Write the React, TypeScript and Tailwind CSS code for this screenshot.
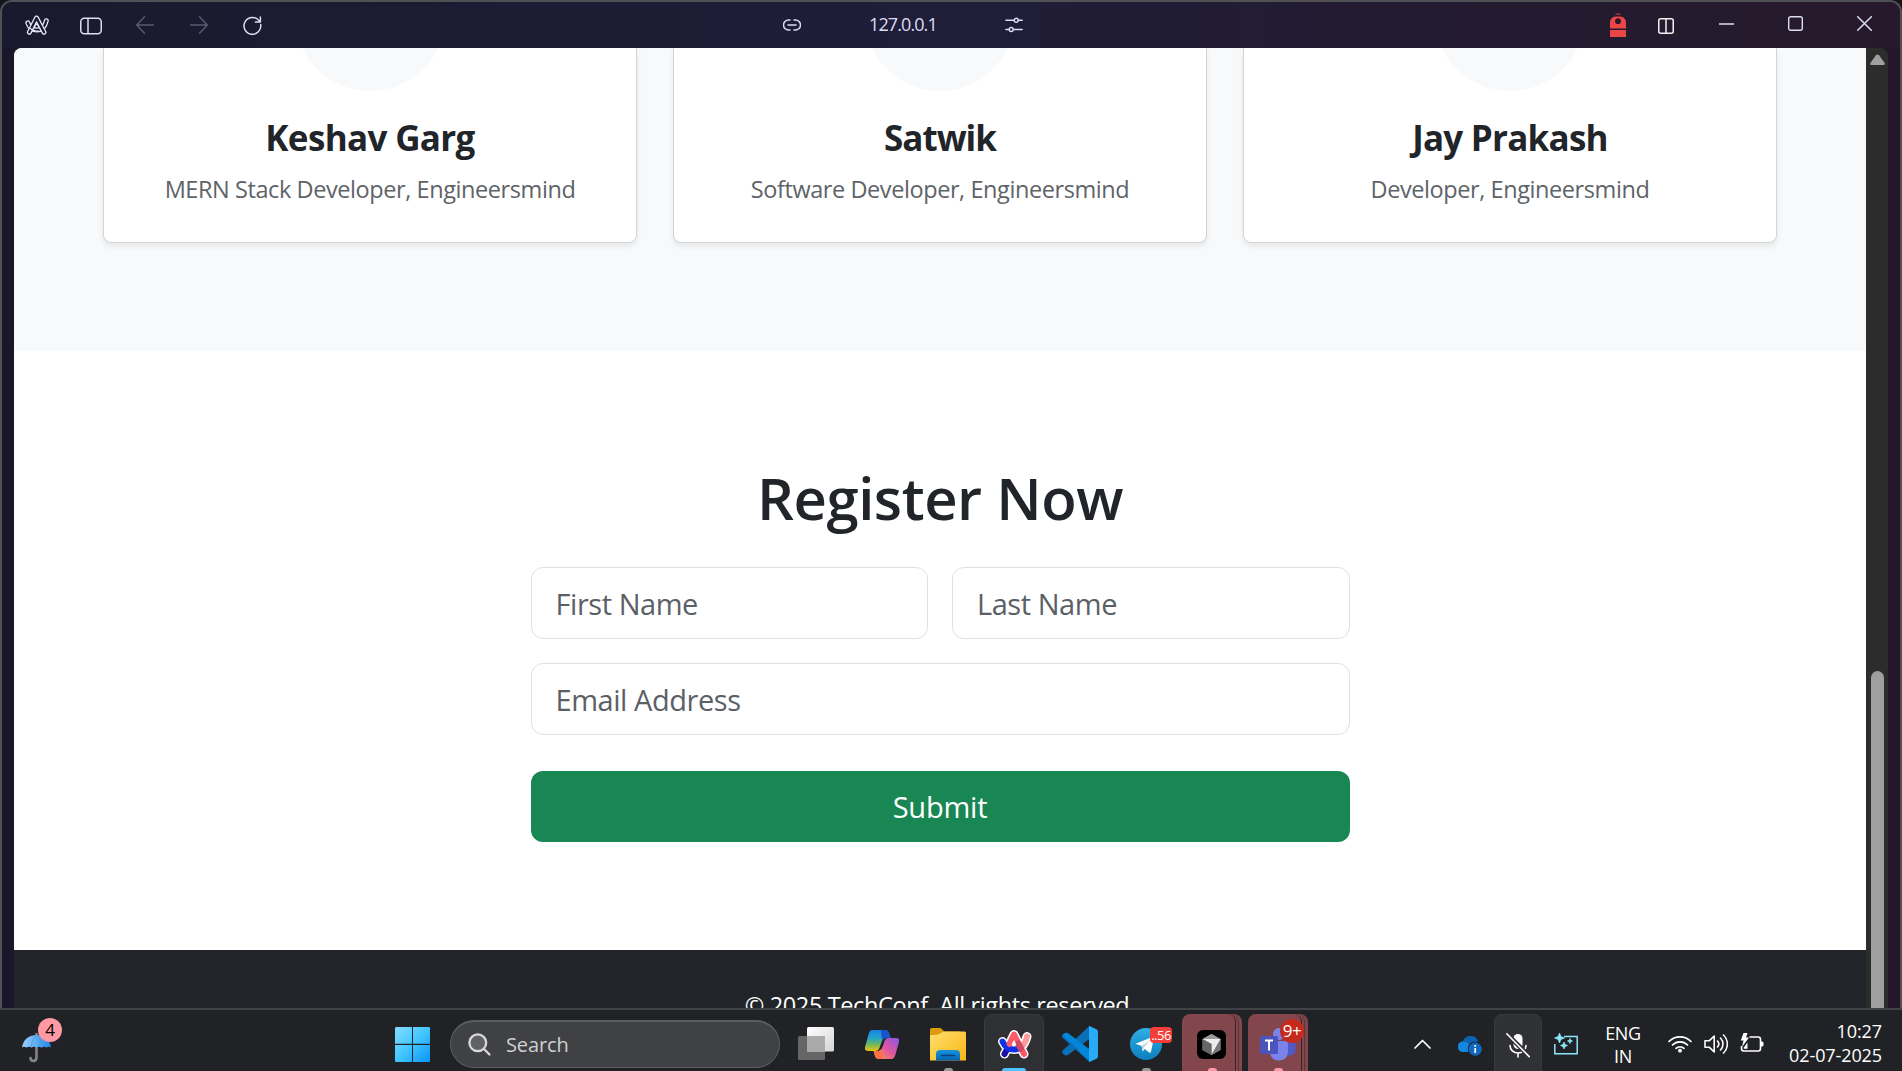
import type { ReactNode } from "react";

const speakers = [
  { name: "Keshav Garg", role: "MERN Stack Developer, Engineersmind", track: "tracking-[-0.65px]" },
  { name: "Satwik", role: "Software Developer, Engineersmind", track: "tracking-[-1px]" },
  { name: "Jay Prakash", role: "Developer, Engineersmind", track: "tracking-[-0.75px]" },
];

function ArcOutline() {
  return (
    <svg className="h-5 w-6" viewBox="0 0 24 20" fill="none" strokeLinecap="round" strokeLinejoin="round">
      <path d="M2.800 7.800c1.500 4.700 4.700 7.200 9.200 7.200 5 0 8-3.500 9.300-9.300" stroke="#e6e6fa" strokeWidth="5" />
      <path d="M2.800 7.800c1.500 4.700 4.700 7.200 9.200 7.200 5 0 8-3.500 9.300-9.300" stroke="#1a1a2e" strokeWidth="2.400" />
      <path d="M4.300 17.300 11.500 3l7.500 14.300" stroke="#e6e6fa" strokeWidth="5" />
      <path d="M4.300 17.300 11.500 3l7.500 14.300" stroke="#1a1a2e" strokeWidth="2.400" />
      <path d="m9.600 11.800 2-3.800 2.200 4M5 13.200c2 2 4.500 3 8.500 3" stroke="#e6e6fa" strokeWidth="1.200" />
    </svg>
  );
}

function TitleBar() {
  return (
    <div className="flex h-[46px] shrink-0 items-center bg-linear-to-r from-[#1a1a2e] via-[#1f1d38] to-[#27192b] text-[#dcdcf5]">
      <div className="flex w-[781px] items-center pl-[23px]">
        <ArcOutline />
        <svg className="ml-[31px] mt-[2px] h-[18px] w-[22px]" viewBox="0 0 22 18" fill="none" stroke="currentColor" strokeWidth="1.5">
          <rect x=".75" y="1.250" width="20.500" height="15.500" rx="3.500" />
          <path d="M8 1v16" />
        </svg>
        <svg className="ml-[34px] h-[18px] w-[18px]" viewBox="0 0 18 18" fill="none" stroke="#5b5972" strokeWidth="1.400" strokeLinecap="round" strokeLinejoin="round">
          <path d="M17.300 9H.8M8.500.8.7 9l7.800 8.200" />
        </svg>
        <svg className="ml-9 h-[18px] w-[18px]" viewBox="0 0 18 18" fill="none" stroke="#5b5972" strokeWidth="1.400" strokeLinecap="round" strokeLinejoin="round">
          <path d="M.7 9h16.500M9.500.8 17.300 9l-7.800 8.200" />
        </svg>
        <svg className="ml-[35px] mt-[1px] h-[19px] w-[19px]" viewBox="0 0 19 19" fill="none" stroke="currentColor" strokeWidth="1.500" strokeLinecap="round" strokeLinejoin="round">
          <path d="M17.700 8.500a8.400 8.400 0 1 1-2-4.200l1.500 1.600M17.400 1v5h-5" />
        </svg>
      </div>
      <svg className="h-3 w-[18px]" viewBox="0 0 18 12" fill="none" stroke="currentColor" strokeWidth="1.500" strokeLinecap="round">
        <path d="M7 1H5.500a4.800 4.800 0 0 0 0 10H7M11 1h1.500a4.800 4.800 0 0 1 0 10H11M5 6h8" />
      </svg>
      <span className="mb-[2px] ml-[68px] w-[70px] text-[18px] leading-6 tracking-[-0.9px]">127.0.0.1</span>
      <svg className="ml-[66px] h-4 w-[18px]" viewBox="0 0 18 16" fill="none" stroke="currentColor" strokeWidth="1.400" strokeLinecap="round">
        <path d="M.8 3.300h8M13.500 3.300h3.700M.8 12.500h3M8.500 12.500h8.700" />
        <circle cx="11.200" cy="3.300" r="2" />
        <circle cx="6.200" cy="12.500" r="2" />
      </svg>
      <div className="ml-auto flex items-center pr-7">
        <svg className="h-6 w-4" viewBox="0 0 16 24" fill="#ec4545">
          <path d="M4.500 1.500a5 3 0 0 1 7 0zM0 15.500V10a8 7 0 0 1 2.500-5.500c1.500-1.300 9.500-1.300 11 0A8 7 0 0 1 16 10v5.500zM0 17h16v7H0z" />
          <circle cx="8" cy="8.200" r="2.900" fill="#27192b" />
        </svg>
        <svg className="ml-8 mt-[2px] h-4 w-4" viewBox="0 0 16 16" fill="none" stroke="#f2f2f2" strokeWidth="1.500">
          <rect x=".75" y=".75" width="14.500" height="14.500" rx="2" />
          <path d="M8 1v14" />
        </svg>
        <svg className="mb-[3px] ml-[45px] h-4 w-[15px]" viewBox="0 0 15 16" stroke="currentColor" strokeWidth="1.400"><path d="M0 8h15" /></svg>
        <svg className="mb-[3px] ml-[54px] h-[15px] w-[15px]" viewBox="0 0 15 15" fill="none" stroke="currentColor" strokeWidth="1.400"><rect x=".7" y=".7" width="13.600" height="13.600" rx="2" /></svg>
        <svg className="mb-[3px] ml-[54px] h-[15px] w-[15px]" viewBox="0 0 15 15" fill="none" stroke="currentColor" strokeWidth="1.500" strokeLinecap="round"><path d="m.7.7 13.600 13.600M14.300.7.7 14.300" /></svg>
      </div>
    </div>
  );
}

const field =
  "h-[72px] w-full rounded-xl border border-[#dee2e6] bg-white px-6 text-[29px] tracking-[-0.45px] text-[#212529] outline-none placeholder:text-[#5b6066] placeholder:opacity-100";

function Page() {
  return (
    <main className="flex w-[1852px] shrink-0 flex-col overflow-hidden rounded-tl-lg bg-white">
      <section className="flex h-[303px] shrink-0 flex-col bg-[#f8f9fb] px-[89px]">
        <div className="grid h-[195px] grid-cols-3 gap-9">
          {speakers.map((s) => (
            <article key={s.name} className="flex flex-col items-center overflow-hidden rounded-b-lg border border-t-0 border-[#d3d4d5] bg-white text-center shadow-[0_3px_6px_rgba(0,0,0,0.075)]">
              <div className="-mt-[107px] h-[150px] w-[150px] shrink-0 rounded-full bg-[#f8f9fb]" />
              <h5 className={"mt-[25px] text-[35px] leading-[43px] font-bold text-[#212529] " + s.track}>{s.name}</h5>
              <p className="mt-3 text-[23.5px] leading-9 tracking-[-0.42px] text-[#5e6368]">{s.role}</p>
            </article>
          ))}
        </div>
      </section>
      <section className="flex h-[599px] shrink-0 flex-col items-center pt-[111px]">
        <h2 className="text-[58px] leading-[72px] font-semibold tracking-[-0.45px] text-[#212529]">Register Now</h2>
        <form className="mt-[33px] flex w-[819px] flex-col">
          <div className="flex gap-6">
            <input className={field} placeholder="First Name" />
            <input className={field} placeholder="Last Name" />
          </div>
          <input className={field + " mt-6"} placeholder="Email Address" />
          <button type="button" className="mt-9 h-[71px] rounded-xl bg-[#198754] text-[29px] tracking-[-0.2px] text-white">Submit</button>
        </form>
      </section>
      <footer className="h-24 shrink-0 bg-[#212529] pt-[37px] text-center text-[23.5px] leading-9 tracking-[-0.38px] text-white">
        © 2025 TechConf. All rights reserved.
      </footer>
    </main>
  );
}

function ScrollBar() {
  return (
    <div className="flex w-[22px] shrink-0 flex-col items-center rounded-tr-lg bg-[#2c2c2c]">
      <svg className="mt-[6px] h-3 w-[15px] shrink-0" viewBox="0 0 15 12" fill="#9f9f9f">
        <path d="M6 1.300Q7.500-.4 9 1.300l5.500 7.500Q15.500 11 13.500 11h-12Q-.5 11 .5 8.800z" />
      </svg>
      <div className="mt-[605px] w-[13px] grow rounded-t-full bg-[#9f9f9f]" />
    </div>
  );
}

function Slot({ children, dot }: { children: ReactNode; dot?: string }) {
  return (
    <div className="relative flex h-[61px] w-[66px] shrink-0 items-center justify-center pt-[7px]">
      {children}
      {dot && <div className={"absolute bottom-0 h-[3px] rounded-t-full " + dot} />}
    </div>
  );
}

/* Stacked, flashing background behind an app with several windows. */
function AlertTile() {
  return (
    <div className="absolute top-1 left-[3px] h-[57px] w-[60px] overflow-hidden rounded-t-lg bg-[#82464c]">
      <div className="absolute inset-y-0 left-0 w-[54px] rounded-tr-lg border-r border-[#38222a]" />
      <div className="absolute inset-y-0 left-0 w-[57px] rounded-tr-lg border-r border-[#5b343a]" />
    </div>
  );
}

function Apps() {
  return (
    <div className="flex h-[61px] items-center">
      <Slot>
        <svg className="h-[34px] w-9" viewBox="0 0 36 34">
          <defs><linearGradient id="tv" x1="0" y1="0" x2="1" y2="1"><stop stopColor="#fff" /><stop offset="1" stopColor="#d5d5d5" /></linearGradient></defs>
          <rect y="9" width="27" height="24" rx="1.500" fill="#666" />
          <rect x="9" width="27" height="24.500" rx="1.500" fill="url(#tv)" />
          <path d="M9 9h18v15.500H9z" fill="#aaa" />
        </svg>
      </Slot>
      <Slot>
        <svg className="h-[31px] w-[34px]" viewBox="0 0 34 31">
          <defs>
            <linearGradient id="cl" x1="0" y1="0" x2="0" y2="1"><stop stopColor="#1583e8" /><stop offset=".4" stopColor="#25a5c4" /><stop offset=".7" stopColor="#76b957" /><stop offset="1" stopColor="#eec40d" /></linearGradient>
            <linearGradient id="cr" x1="1" y1="0" x2="0" y2="1"><stop stopColor="#8856e8" /><stop offset=".5" stopColor="#e0569f" /><stop offset="1" stopColor="#ff9a45" /></linearGradient>
          </defs>
          <path d="M7 1h13q3 0 4 3l1.500 5H21q-3 0-4 3l-3 8q-1 2-4 2H3q-4 0-3-4L4 4q1-3 3-3z" fill="url(#cl)" />
          <path d="M16 1h4q3 0 4 3l1.500 5H20q-2 0-3 2z" fill="#1b50cf" />
          <path d="M27 30H14q-3 0-4-3l-1.500-5H13q3 0 4-3l3-8q1-2 4-2h7q4 0 3 4l-4 14q-1 3-3 3z" fill="url(#cr)" />
          <path d="M18 30h-4q-3 0-4-3l-1.500-5H13q2 0 3-2z" fill="#ff7044" />
        </svg>
      </Slot>
      <Slot dot="w-[9px] bg-[#9a9a9a]">
        <svg className="h-[33px] w-9" viewBox="0 0 36 33">
          <defs>
            <linearGradient id="fo" x1="0" y1="0" x2="1" y2="1"><stop stopColor="#ffdf70" /><stop offset="1" stopColor="#f9b613" /></linearGradient>
            <linearGradient id="fb" x1="0" y1="0" x2="0" y2="1"><stop stopColor="#1895dc" /><stop offset="1" stopColor="#0763b1" /></linearGradient>
          </defs>
          <path d="M0 1.500Q0 0 1.500 0h9l4 3.500H30V12H0z" fill="#dc9b08" />
          <path d="M0 7q8 0 10-1.500L14 3.500h20.500Q36 3.500 36 5v27.500H0z" fill="url(#fo)" />
          <path d="M6 32.500V26q0-4 4-4h16q4 0 4 4v6.500z" fill="url(#fb)" />
          <path d="M11.500 27.500h13" stroke="#06427f" strokeWidth="1.500" strokeLinecap="round" />
        </svg>
      </Slot>
      <Slot dot="w-6 bg-[#4cc2ff]">
        <div className="absolute top-1 h-[57px] w-[60px] rounded-t-lg border border-b-0 border-[#393a3e] bg-[#2f3034]" />
        <svg className="relative left-[1px] h-[30px] w-[34px]" viewBox="0 0 34 30" fill="none" strokeLinecap="round" strokeLinejoin="round">
          <path d="M4.500 12.500c2.500 5.500 6 8 11.500 8 6.500 0 11-5 13-13M6.500 25l9.500-19.500L26 25" stroke="#fff" strokeWidth="9" />
          <path d="M29 7.500c-1 5-3 8.500-6 10.500" stroke="#ff9a9f" strokeWidth="6" />
          <path d="m6.500 25 3-5.500" stroke="#1b0fa5" strokeWidth="6" />
          <path d="M4.500 12.500c2.500 5.500 6 8 11.500 8 2.500 0 4.500-.8 6-1.500" stroke="#0c33ea" strokeWidth="6" />
          <path d="M11.500 15 16 5.500 26 25" stroke="#fb5a6a" strokeWidth="6" />
          <path d="m20 14.500 2.800 5" stroke="#d34862" strokeWidth="6" />
          <path d="m13.600 15.500 2.400-4.500 2.300 4.500q-2.300 1.500-4.700 0z" fill="#fff" />
        </svg>
      </Slot>
      <Slot>
        <svg className="h-9 w-9" viewBox="0 0 36 36">
          <path d="M1 12q-2-2 0-3.500l2-1.500q1.500-.8 3 .3L27 23v12.500z" fill="#0179cb" />
          <path d="M1 24q-2 2 0 3.500L3 29q1.500.8 3-.3L27 13V.5z" fill="#0866a9" />
          <path d="m1 25 17-15.500L27 .3V13L6 28.700q-1.500 1-3 .3l-2-1.500q-1.500-1.200 0-2.500z" fill="#0b6fb5" />
          <path d="m1 9 26 25.500V23L6 7.300q-1.500-1-3-.3L1 8.500z" fill="#0386d8" />
          <path d="M27 0q.5 0 1 .3l6.500 3Q36 4 36 5.500v25q0 1.500-1.500 2.200l-6.500 3q-.5.300-1 .3z" fill="#29aaf5" />
        </svg>
      </Slot>
      <Slot dot="w-[9px] bg-[#9a9a9a]">
        <svg className="h-8 w-8" viewBox="0 0 32 32">
          <defs><linearGradient id="tg" x1="0" y1="0" x2="0" y2="1"><stop stopColor="#2faee5" /><stop offset="1" stopColor="#0d7fbd" /></linearGradient></defs>
          <circle cx="16" cy="16" r="16" fill="url(#tg)" />
          <path d="m5.500 15.700 17-6.600q1.600-.5 1.300 1.300l-2.800 13.400q-.5 1.500-1.900.7L14.800 21l-2.200 2.500-.9-5.500z" fill="#fff" />
          <path d="m11.700 18 8.600-6-6.400 7.500-1.300 4z" fill="#b7d9ea" />
        </svg>
        <span className="absolute top-[17px] left-[37px] h-4 w-[22px] rounded bg-[#f43f38] text-center text-[13px] leading-4 tracking-[-0.5px] text-white">..56</span>
      </Slot>
      <Slot dot="left-[29px] w-[9px] bg-[#ff99a4]">
        <AlertTile />
        <svg className="relative -left-[1px] h-[29px] w-[29px]" viewBox="0 0 29 29">
          <rect width="29" height="29" rx="6" fill="#000" />
          <path d="m14.500 4 9 5v11l-9 5-9-5V9z" fill="#8e8e8e" />
          <path d="m14.500 4 9 5H5.500z" fill="#9b9b9b" />
          <path d="M5.500 9h18l-9 16V14z" fill="#ececec" />
          <path d="m5.500 9 9 5v11l-9-5z" fill="#666" />
          <path d="m23.500 9v11l-9 5z" fill="#777" />
        </svg>
      </Slot>
      <Slot dot="left-[29px] w-[9px] bg-[#ff99a4]">
        <AlertTile />
        <svg className="relative h-[33px] w-9" viewBox="0 0 36 33">
          <circle cx="19" cy="6" r="6" fill="#7b83eb" />
          <circle cx="30" cy="8" r="4.500" fill="#5059c9" />
          <path d="M25 13h9.500q1 0 1 1.500V21q0 6.500-6 6.500-3 0-5-2z" fill="#5059c9" />
          <path d="M10 13h16.500q1.500 0 1.500 1.500V23q0 9-9 9.500-9 0-9-9.500z" fill="#7b83eb" />
          <rect y="8" width="18" height="18" rx="1.500" fill="#4b53bc" />
          <path d="M5 12.500h8M9 12.500v10" stroke="#fff" strokeWidth="2" />
        </svg>
        <span className="absolute top-[9px] left-[35px] h-6 w-6 rounded-full bg-[#c42b1c] text-center text-[17px] leading-6 tracking-[-0.5px] text-white">9+</span>
      </Slot>
    </div>
  );
}

function Tray() {
  return (
    <div className="ml-auto flex h-[61px] items-center pr-[20px] text-white">
      <svg className="mt-[7px] h-[10px] w-[17px]" viewBox="0 0 17 10" fill="none" stroke="currentColor" strokeWidth="1.700" strokeLinecap="round" strokeLinejoin="round"><path d="m1 9 7.500-7.500L16 9" /></svg>
      <svg className="mt-[11px] ml-[27px] h-5 w-6" viewBox="0 0 24 20">
        <path d="M4.500 16Q0 15 0 10.500 0 6 5 5.500 7 0 12.500 0q5 0 7.500 5-6 1-8 6l-1 5z" fill="#0f6cbd" />
        <path d="M0 10.500Q0 6 5 5.500q4 0 7 4l-1 6.500H5q-5-.5-5-5.500z" fill="#1488e0" />
        <path d="M5 5.500q5 0 8.500 4L20 5q-2-5-7.500-5Q7 0 5 5.500z" fill="#0a62b5" />
        <circle cx="17" cy="13" r="7.300" fill="#202226" />
        <circle cx="17.200" cy="13.200" r="6.600" fill="#0f67be" />
        <path d="M17.200 12v5M17.200 9v1.700" stroke="#fff" strokeWidth="1.700" />
      </svg>
      <div className="ml-3 flex h-[57px] w-12 items-center justify-center self-end rounded-t-lg border border-b-0 border-[#38393c] bg-[#303135] pt-1">
        <svg className="h-[25px] w-6" viewBox="0 0 24 25" fill="none" stroke="#fff" strokeWidth="1.600" strokeLinecap="round">
          <rect x="7.500" y="1" width="9" height="15" rx="4.500" fill="#fff" stroke="none" />
          <path d="M4 12.500a8 7.500 0 0 0 16 0M12 20.500V24" />
          <path d="M0 0 24 24" stroke="#303135" strokeWidth="4.500" />
          <path d="M.8.800 23.200 23.600" />
        </svg>
      </div>
      <svg className="mt-[7px] ml-3 h-[22px] w-6" viewBox="0 0 24 22" fill="none" stroke="#8ce6fa" strokeWidth="1.500">
        <path d="M10 3.500h13.200v17.200H.8V11" />
        <path d="m5.500 0 1.400 3.600L10.500 5 6.900 6.400 5.500 10 4.100 6.400.5 5l3.600-1.400zM10 9l1.100 2.400 2.400 1.100-2.400 1.100L10 16l-1.100-2.400-2.400-1.100 2.400-1.100zM16 5.500l.8 1.700 1.700.8-1.700.8-.8 1.700-.8-1.700-1.700-.8 1.700-.8z" fill="#8ce6fa" stroke="#8ce6fa" strokeWidth=".7" />
      </svg>
      <div className="mt-[8px] ml-[26px] w-[38px] text-center text-[18px] leading-[23px] tracking-[-0.3px]">ENG<br />IN</div>
      <svg className="mt-[7px] ml-[26px] h-[18px] w-6" viewBox="0 0 24 18" fill="none" stroke="currentColor" strokeWidth="1.700" strokeLinecap="round">
        <path d="M1 6.500a15.500 15.500 0 0 1 22 0M4.500 10a10.500 10.500 0 0 1 15 0M8 13.300a6 6 0 0 1 8 0" />
        <circle cx="12" cy="15.700" r="1.900" fill="currentColor" stroke="none" />
      </svg>
      <svg className="mt-[7px] ml-3 h-5 w-6" viewBox="0 0 24 20" fill="none" stroke="currentColor" strokeWidth="1.600" strokeLinecap="round" strokeLinejoin="round">
        <path d="M1 6.800v6.400h4.200l5 4.800V2l-5 4.800zM13.500 7a4.500 4.500 0 0 1 0 6M16.500 4a8.500 8.500 0 0 1 0 12M19.500 1a12.500 12.500 0 0 1 0 18" />
      </svg>
      <svg className="mt-[5px] ml-3 h-5 w-6" viewBox="0 0 24 20" fill="none" stroke="currentColor" strokeWidth="1.600" strokeLinejoin="round">
        <path d="M9.500 4h8.700q2.300 0 2.300 2.500v9q0 2.500-2.300 2.500H3.800q-2.300 0-2.300-2.500V13" />
        <path d="M20.500 8.500H22q1.500 0 1.500 1.500v2q0 1.500-1.500 1.500h-1.500z" fill="currentColor" stroke="none" />
        <path d="M3.500 0h4L6 4.500h3L2 14l1.500-6.500H.8z" fill="currentColor" stroke="none" />
        <path d="M3.800 15.800V14.500L7.500 9.500v6.300z" fill="currentColor" stroke="none" />
      </svg>
      <div className="mt-[4px] ml-[20px] w-[98px] text-right text-[18px] leading-6 tracking-[-0.1px] whitespace-nowrap">10:27<br />02-07-2025</div>
    </div>
  );
}

function Taskbar() {
  return (
    <div className="flex h-[63px] shrink-0 items-center border-t-2 border-[#414245] bg-[#202226]">
      <div className="relative ml-[22px] h-[61px] w-[30px]">
        <svg className="mt-[23px] h-[30px] w-[30px]" viewBox="0 0 30 30">
          <defs><linearGradient id="um" x1="0" x2="1"><stop stopColor="#9dd0ff" /><stop offset="1" stopColor="#1f86e6" /></linearGradient></defs>
          <path d="M14.500 0v24q0 4-3 4T8.500 25" fill="none" stroke="#858585" strokeWidth="2.600" strokeLinecap="round" />
          <path d="M0 14.500Q2 2.500 14.500 2 27 2.500 29 14.500q-2-1.500-4.500 0-2.500-1.500-5 0-2.500-1.500-5 0-2.500-1.500-5 0-2.500-1.500-5 0-2.500-1.500-4.500 0z" fill="url(#um)" />
          <path d="M14.500 2Q9.500 6 9.500 14.500M14.500 2q5 4 5 12.500" fill="none" stroke="#4d9fe8" strokeWidth="1" />
        </svg>
        <span className="absolute top-[8px] left-4 h-6 w-6 rounded-full bg-[#ff99a4] text-center text-[17px] leading-6 text-black">4</span>
      </div>
      <svg className="mt-[8px] ml-[343px] h-[35px] w-[35px]" viewBox="0 0 35 35">
        <defs><linearGradient id="wn" gradientUnits="userSpaceOnUse" x1="0" y1="0" x2="35" y2="35"><stop stopColor="#86dcff" /><stop offset=".5" stopColor="#41c6ff" /><stop offset="1" stopColor="#0a93fb" /></linearGradient></defs>
        <path d="M1 0h16v16.700H0V1zM18 0h16q1 0 1 1v15.700H18zM0 18h17v17H1q-1 0-1-1zM18 18h17v16q0 1-1 1H18z" fill="url(#wn)" />
      </svg>
      <label className="mt-[7px] ml-5 flex h-12 w-[330px] items-center rounded-full border border-t-2 border-[#5b5c5f] bg-[#404145] pl-[17px]">
        <svg className="h-[23px] w-[23px]" viewBox="0 0 23 23" fill="#606165" stroke="#d9d9d9" strokeWidth="2.300" strokeLinecap="round"><circle cx="9.800" cy="9.800" r="8.400" /><path d="m16 16 5.500 5.500" /></svg>
        <span className="ml-[15px] text-[20px] leading-6 tracking-[-0.1px] text-[#cfcfcf]">Search</span>
      </label>
      <div className="ml-[3px]"><Apps /></div>
      <Tray />
    </div>
  );
}

export default function App() {
  return (
    <div className="flex h-[1071px] w-[1902px] flex-col overflow-hidden bg-[#151518] font-['Open_Sans',sans-serif]">
      <div className="flex h-[1008px] shrink-0 flex-col overflow-hidden rounded-t-xl border-2 border-b-0 border-[#505154] bg-[#1a172b]">
        <TitleBar />
        <div className="flex min-h-0 grow bg-linear-to-r from-[#1a172b] to-[#25172a] pl-3">
          <Page />
          <ScrollBar />
        </div>
      </div>
      <Taskbar />
    </div>
  );
}
